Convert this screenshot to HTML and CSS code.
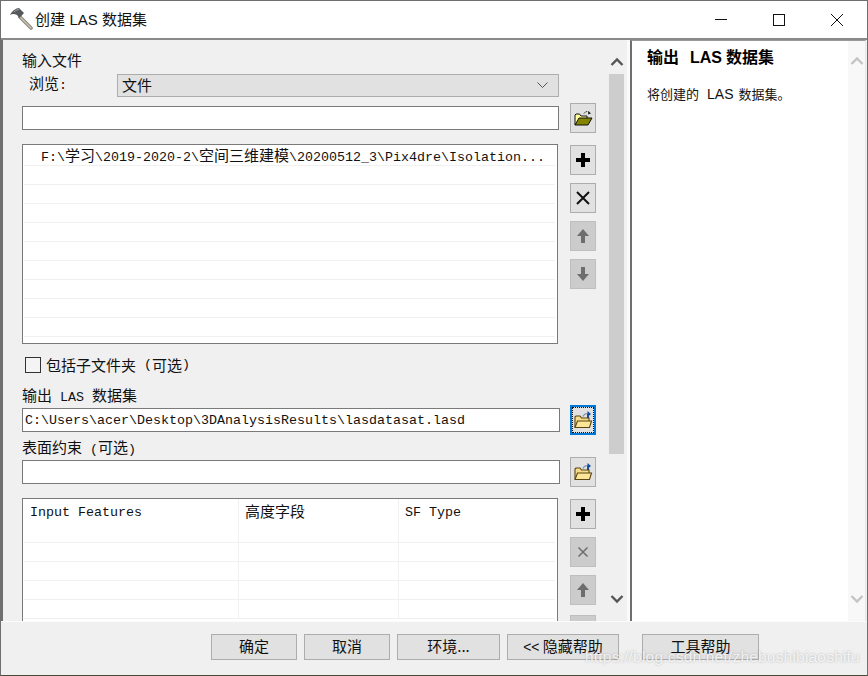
FILE: index.html
```html
<!DOCTYPE html>
<html lang="zh-CN">
<head>
<meta charset="utf-8">
<title>创建 LAS 数据集</title>
<link rel="stylesheet" href="styles.css">
</head>
<body>
<svg class="defs" width="0" height="0">
  <defs>
    <symbol id="folder-old" viewBox="0 0 20 20">
      <path d="M11 5.5 C12.5 3 15 3 16.5 5" fill="none" stroke="#222" stroke-width="1" stroke-dasharray="1.5 .8"/>
      <path d="M15.5 3 L18 5.5 L15 6.5 Z" fill="#222"/>
      <path d="M2 17 V7 L3 6 H6.5 L8 8 H14 V10" fill="#ffff9c" stroke="#111" stroke-width="1"/>
      <path d="M2 17 L6 10 H19 L15 17 Z" fill="#848400" stroke="#111" stroke-width="1"/>
    </symbol>
    <symbol id="folder" viewBox="0 0 20 20">
      <path d="M10 6.5 C11 4 13 3.5 15 3.5" fill="none" stroke="#7a8cb0" stroke-width="1.2"/>
      <path d="M14.5 1 L18 4 L14.5 7 Z" fill="#0f4f9e"/>
      <path d="M15 4 V8" stroke="#0f4f9e" stroke-width="2"/>
      <path d="M2 17 V7 L3 6 H7 L8.500 8 H16 V11" fill="#f6dc8a" stroke="#5b4412" stroke-width="1.100"/>
      <path d="M2 17.500 L4.500 11 H18.500 L16.500 17.500 Z" fill="#fbe596" stroke="#5b4412" stroke-width="1.100"/>
    </symbol>
    <symbol id="plus" viewBox="0 0 16 16">
      <path d="M6 1 H10 V6 H15 V10 H10 V15 H6 V10 H1 V6 H6 Z"/>
    </symbol>
    <symbol id="cross" viewBox="0 0 16 16">
      <path d="M2 2 L14 14 M14 2 L2 14" fill="none" stroke="currentColor" stroke-width="2"/>
    </symbol>
    <symbol id="up" viewBox="0 0 14 16">
      <path d="M7 1 L13 8 H9 V15 H5 V8 H1 Z"/>
    </symbol>
    <symbol id="down" viewBox="0 0 14 16">
      <path d="M7 15 L13 8 H9 V1 H5 V8 H1 Z"/>
    </symbol>
    <symbol id="chev-up" viewBox="0 0 14 10">
      <path d="M1.500 8 L7 2.500 L12.500 8" fill="none" stroke="currentColor" stroke-width="2.400"/>
    </symbol>
    <symbol id="chev-down" viewBox="0 0 14 10">
      <path d="M1.500 2 L7 7.500 L12.500 2" fill="none" stroke="currentColor" stroke-width="2.400"/>
    </symbol>
  </defs>
</svg>

<div class="window">
  <header class="titlebar">
    <svg class="app-icon" width="24" height="24" viewBox="0 0 24 24">
      <path d="M11 11 L22 22" stroke="#8f8a7c" stroke-width="3.600" stroke-linecap="round"/>
      <path d="M11 11 L22 22" stroke="#c9c2b0" stroke-width="1.400" stroke-linecap="round"/>
      <path d="M1 9 C3 5 7 2 10 2 L15 7 L10.500 12 L8 9 C5 7.500 3 8 1 9 Z" fill="#55595c"/>
      <path d="M5 6 C7 4 9 3.500 10 3.500" stroke="#a3a7aa" stroke-width="1" fill="none"/>
    </svg>
    <div class="title">创建 <span class="latin">LAS</span> 数据集</div>
    <div class="win-controls">
      <svg class="ctl" width="58" height="38" viewBox="0 0 58 38"><path d="M23 18.500 H35" stroke="#111"/></svg>
      <svg class="ctl" width="58" height="38" viewBox="0 0 58 38"><rect x="23.500" y="13.500" width="11" height="11" fill="none" stroke="#111"/></svg>
      <svg class="ctl" width="58" height="38" viewBox="0 0 58 38"><path d="M23 13 L35 25 M35 13 L23 25" stroke="#111"/></svg>
    </div>
  </header>

  <main class="main">
    <section class="left-pane">
      <div class="form">
        <div class="label first-label">输入文件</div>
        <div class="browse-row">
          <span class="browse-label">浏览<span class="m">:</span></span>
          <div class="combo"><span class="combo-text">文件</span>
            <svg class="combo-arrow" width="11" height="7" viewBox="0 0 11 7"><path d="M.5 .5 L5.500 5.500 L10.500 .5" fill="none" stroke="#555"/></svg>
          </div>
        </div>
        <div class="field-row gap-input">
          <div class="input w537"></div>
          <button class="btn"><svg class="ico-folder" width="20" height="20"><use href="#folder-old"/></svg></button>
        </div>

        <div class="list-row">
          <div class="list">
            <div class="list-row-item first-item"><span class="m">F:\</span>学习<span class="m">\2019-2020-2\</span>空间三维建模<span class="m">\20200512_3\Pix4dre\Isolation...</span></div>
            <div class="list-row-item"></div>
            <div class="list-row-item"></div>
            <div class="list-row-item"></div>
            <div class="list-row-item"></div>
            <div class="list-row-item"></div>
            <div class="list-row-item"></div>
            <div class="list-row-item"></div>
            <div class="list-row-item"></div>
            <div class="list-row-item"></div>
          </div>
          <div class="btn-col">
            <button class="btn"><svg width="16" height="16"><use href="#plus"/></svg></button>
            <button class="btn"><svg class="ico-x" width="16" height="16"><use href="#cross"/></svg></button>
            <button class="btn disabled"><svg width="14" height="16"><use href="#up"/></svg></button>
            <button class="btn disabled"><svg width="14" height="16"><use href="#down"/></svg></button>
          </div>
        </div>

        <label class="check-row"><span class="checkbox"></span>包括子文件夹<span class="m"> (</span>可选<span class="m">)</span></label>

        <div class="label label-out">输出<span class="m"> LAS </span>数据集</div>
        <div class="field-row">
          <div class="input w538 path"><span class="m">C:\Users\acer\Desktop\3DAnalysisResults\lasdatasat.lasd</span></div>
          <button class="btn focused"><svg class="ico-folder" width="20" height="20"><use href="#folder"/></svg></button>
        </div>

        <div class="label label-surface">表面约束<span class="m"> (</span>可选<span class="m">)</span></div>
        <div class="field-row">
          <div class="input w538"></div>
          <button class="btn"><svg class="ico-folder" width="20" height="20"><use href="#folder"/></svg></button>
        </div>

        <div class="list-row table-row">
          <div class="grid-table">
            <div class="cell head"><span class="m">Input Features</span></div>
            <div class="cell head">高度字段</div>
            <div class="cell head last"><span class="m">SF Type</span></div>
            <div class="cell"></div><div class="cell"></div><div class="cell last"></div>
            <div class="cell"></div><div class="cell"></div><div class="cell last"></div>
            <div class="cell"></div><div class="cell"></div><div class="cell last"></div>
            <div class="cell"></div><div class="cell"></div><div class="cell last"></div>
            <div class="cell"></div><div class="cell"></div><div class="cell last"></div>
          </div>
          <div class="btn-col">
            <button class="btn"><svg width="16" height="16"><use href="#plus"/></svg></button>
            <button class="btn disabled"><svg class="ico-x-small" width="12" height="12"><use href="#cross"/></svg></button>
            <button class="btn disabled"><svg width="14" height="16"><use href="#up"/></svg></button>
            <button class="btn disabled btn-last"><svg width="14" height="16"><use href="#down"/></svg></button>
          </div>
        </div>
      </div>

      <div class="scrollbar">
        <svg class="chev" width="14" height="10"><use href="#chev-up"/></svg>
        <div class="thumb"></div>
        <svg class="chev chev-down" width="14" height="10"><use href="#chev-down"/></svg>
      </div>
    </section>

    <aside class="help-pane">
      <div class="help-text">
        <h2 class="help-title">输出<span class="latin title-las">LAS</span>数据集</h2>
        <p class="help-desc">将创建的<span class="latin desc-las">LAS</span>数据集。</p>
      </div>
      <div class="help-scroll">
        <svg class="chev" width="14" height="10"><use href="#chev-up"/></svg>
        <svg class="chev" width="14" height="10"><use href="#chev-down"/></svg>
      </div>
    </aside>
  </main>

  <footer class="footer">
    <button class="fbtn w86">确定</button>
    <button class="fbtn w86">取消</button>
    <button class="fbtn w103">环境...</button>
    <button class="fbtn w112"><span class="lt">&lt;&lt;</span> 隐藏帮助</button>
    <button class="fbtn w117">工具帮助</button>
  </footer>
  <div class="watermark">https://blog.csdn.net/zhebushibiaoshifu</div>
</div>
</body>
</html>
```

FILE: styles.css
```css
* { box-sizing: border-box; }
html, body { margin: 0; padding: 0; }
body {
  width: 868px;
  height: 676px;
  overflow: hidden;
  font-family: "Noto Sans CJK SC", "Liberation Sans", sans-serif;
  font-size: 15px;
  line-height: 18px;
  color: #111;
  background: #f0f0f0;
}
.defs { display: block; height: 0; }
.m { font-family: "Liberation Mono", "Noto Sans CJK SC", monospace; font-size: 13.33px; white-space: pre; }
.latin { font-family: "Liberation Sans", "Noto Sans CJK SC", sans-serif; }

.window {
  position: relative;
  width: 868px;
  height: 676px;
  display: flex;
  flex-direction: column;
  overflow: hidden;
  border-left: 1px solid #6f6f6f;
  border-right: 1px solid #6f6f6f;
  border-top: 1px solid #6f6f6f;
  border-bottom: 1px solid #4b4b3c;
}

/* title bar */
.titlebar {
  flex: none;
  height: 37px;
  display: flex;
  align-items: center;
  background: #fff;
  padding-left: 8px;
}
.app-icon { flex: none; margin-top: -3px; }
.title { margin-left: 2px; font-size: 15px; margin-top: -1px; word-spacing: 1px; }
.win-controls { margin-left: auto; display: flex; margin-right: 1px; }
.ctl { display: block; }

/* panes */
.main {
  flex: none;
  height: 583px;
  display: flex;
  border-top: 2px solid #8a8a8a;
  background: #f0f0f0;
}
.left-pane {
  flex: none;
  width: 629px;
  display: flex;
  border-left: 2px solid #6f6f6f;
  border-right: 3px solid #fafafa;
  background: #f0f0f0;
  overflow: hidden;
}
.form {
  flex: none;
  width: 606px;
  padding: 10px 0 0 19px;
  overflow: hidden;
}
.label { height: 18px; line-height: 16px; }
.first-label { height: 20px; line-height: 20px; }
.browse-row { margin-top: 4px; height: 23px; display: flex; align-items: center; }
.browse-label { width: 95px; padding-left: 7px; flex: none; line-height: 18px; margin-top: -3px; }
.combo {
  width: 442px;
  height: 23px;
  padding: 0 10px 0 4px;
  display: flex;
  align-items: center;
  justify-content: space-between;
  background: #e1e1e1;
  border: 1px solid #adadad;
}
.combo-text { line-height: 18px; margin-top: -2px; }
.field-row { display: flex; align-items: center; height: 30px; }
.gap-input { margin-top: 6px; }
.input {
  height: 24px;
  background: #fff;
  border: 1px solid #7a7a7a;
  padding-left: 2px;
  line-height: 21px;
  white-space: nowrap;
}
.path { line-height: 18px; }
.w537 { width: 537px; margin-right: 11px; }
.w538 { width: 538px; margin-right: 10px; }

.btn {
  flex: none;
  width: 26px;
  height: 30px;
  padding: 0;
  display: flex;
  align-items: center;
  justify-content: center;
  background: #e1e1e1;
  border: 1px solid #adadad;
  color: #000;
  fill: #000;
}
.btn.disabled { background: #cccccc; border-color: #bfbfbf; color: #6d6d6d; fill: #6d6d6d; }
.btn.focused { border: 2px solid #0078d7; outline: 1px dotted #111; outline-offset: -3px; }
.ico-x { color: #111; }
.ico-folder { display: block; }

.list-row { margin-top: 11px; display: flex; align-items: flex-start; }
.list {
  width: 536px;
  height: 200px;
  margin-right: 12px;
  background: #fff;
  border: 1px solid #7a7a7a;
  padding: 0 2px 0 1px;
  overflow: hidden;
}
.list-row-item { height: 19px; border-bottom: 1px solid #f0f0f0; white-space: nowrap; }
.first-item { height: 21px; padding-left: 17px; line-height: 19px; }
.btn-col { display: flex; flex-direction: column; gap: 8px; margin-top: 1px; }
.btn-last { margin-top: 2px; }

.check-row { display: flex; align-items: center; height: 16px; margin-top: 13px; padding-left: 3px; white-space: nowrap; }
.checkbox { width: 16px; height: 16px; margin-right: 5px; background: #f4f4f4; border: 1px solid #333; flex: none; }
.label-out { margin-top: 14px; }
.label-surface { margin-top: 4px; }

.table-row { margin-top: 11px; height: 140px; overflow: hidden; }
.grid-table {
  width: 536px;
  height: 140px;
  margin-right: 12px;
  flex: none;
  display: grid;
  grid-template-columns: 215px 160px 156px;
  grid-template-rows: 25px repeat(5, 19px);
  align-content: start;
  background: #fff;
  border: 1px solid #7a7a7a;
  padding: 0 2px 0 1px;
}
.cell { border-right: 1px solid #f0f0f0; border-bottom: 1px solid #f0f0f0; }
.cell.last { border-right: 0; }
.cell.head { border-bottom: 0; padding-left: 6px; line-height: 23px; }
.cell.head .m { vertical-align: 1px; }

.scrollbar {
  flex: none;
  width: 18px;
  display: flex;
  flex-direction: column;
  align-items: center;
  padding: 17px 3px 0 0;
  color: #555;
}
.chev { display: block; flex: none; }
.thumb { width: 15px; height: 380px; margin-top: 7px; background: #cdcdcd; flex: none; }
.chev-down { margin-top: 140px; }

.help-pane {
  flex: none;
  width: 236px;
  display: flex;
  background: #fff;
  border-left: 2px solid #6f6f6f;
  border-top: 1px solid #9a9a9a;
  border-right: 1px solid #e8e8e8;
}
.help-text { flex: 1; padding: 3px 0 0 15px; }
.help-title { margin: 0; font-size: 16px; font-weight: 700; line-height: 24px; color: #000; white-space: nowrap; }
.title-las { margin: 0 4px 0 11px; }
.help-desc { margin: 15px 0 0; font-size: 13px; line-height: 18px; white-space: nowrap; }
.desc-las { margin: 0 5px 0 8px; font-size: 14px; }
.help-scroll {
  flex: none;
  width: 17px;
  background: #f8f8f8;
  display: flex;
  flex-direction: column;
  align-items: center;
  justify-content: space-between;
  padding: 15px 0 17px;
  color: #c4c4c4;
}

/* footer */
.footer {
  flex: 1;
  display: flex;
  align-items: flex-start;
  padding: 12px 0 0 210px;
  gap: 7px;
  background: #f0f0f0;
  border-top: 1px solid #fbfbfb;
}
.fbtn {
  height: 26px;
  padding: 0 0 2px;
  font: inherit;
  line-height: 20px;
  color: #111;
  background: #e1e1e1;
  border: 1px solid #adadad;
}
.w86 { width: 86px; }
.w103 { width: 103px; }
.w112 { width: 112px; margin-right: 16px; }
.w117 { width: 117px; }
.lt { font-family: "Liberation Sans", sans-serif; font-size: 14px; }

.watermark {
  position: absolute;
  left: 584px;
  top: 647px;
  font-family: "Liberation Sans", sans-serif;
  font-size: 15.5px;
  line-height: 18px;
  letter-spacing: .2px;
  color: rgba(255, 255, 255, .8);
  text-shadow: 0 0 2px rgba(120, 120, 120, .55);
  white-space: nowrap;
}
```
